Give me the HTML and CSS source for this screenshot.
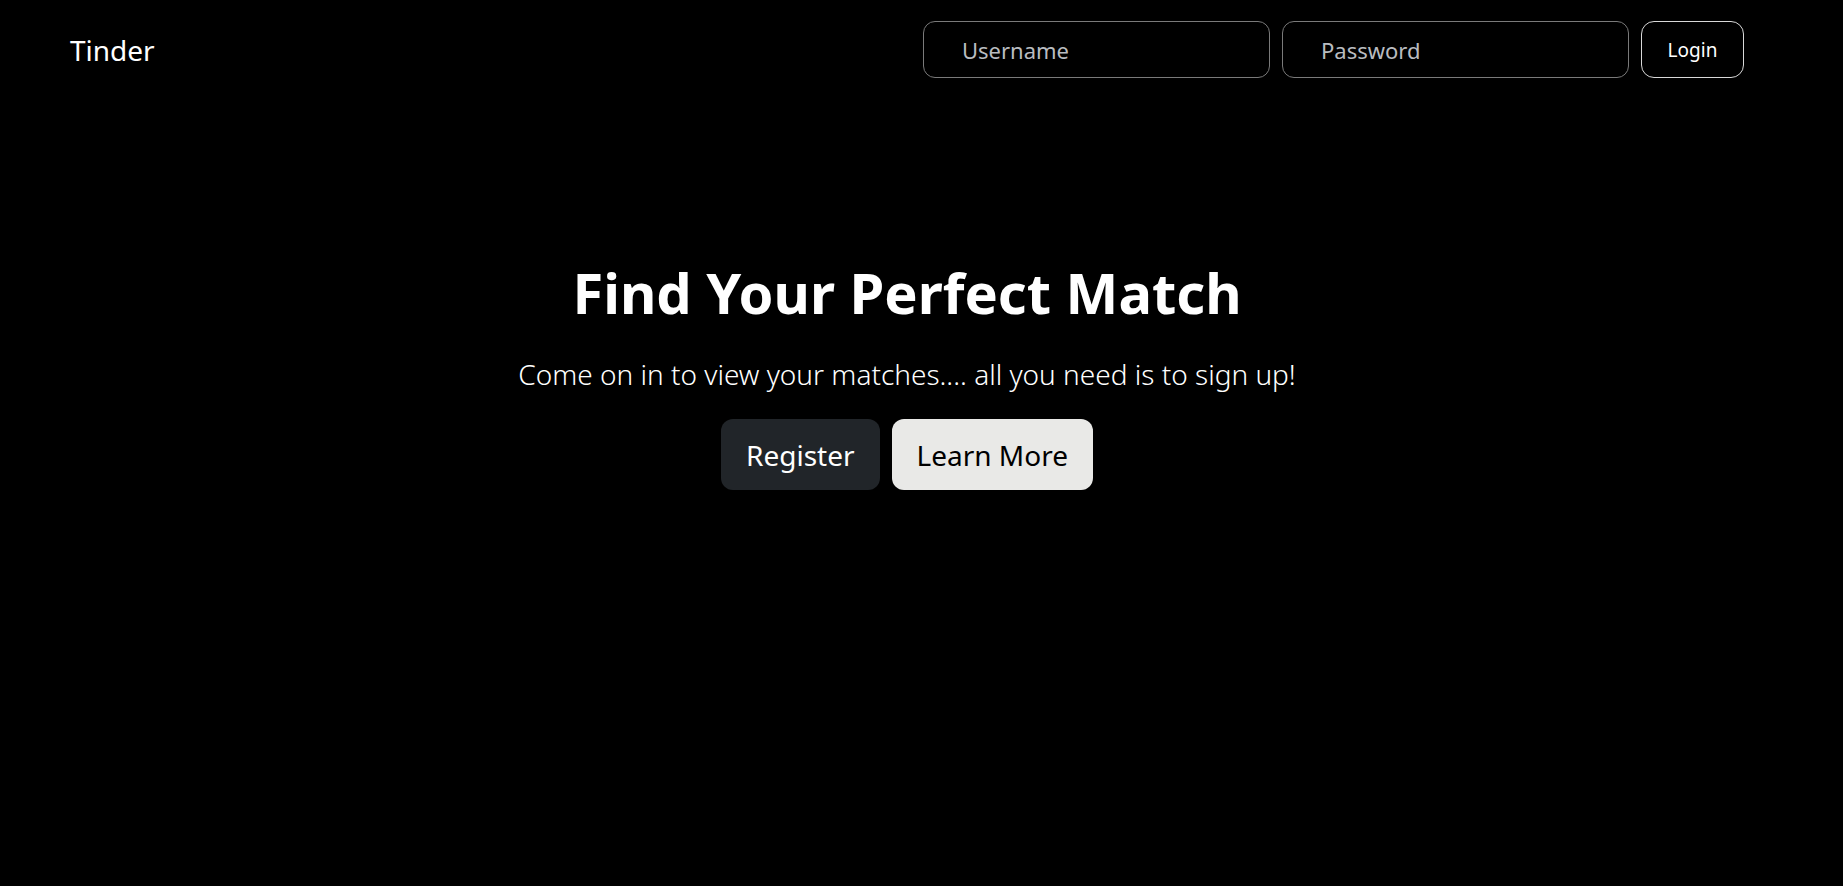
FILE: index.html
```html
<!DOCTYPE html>
<html lang="en">
<head>
<meta charset="utf-8">
<title>Tinder</title>
<link rel="stylesheet" href="styles.css">
</head>
<body>
<nav class="navbar">
  <a class="brand" href="#">Tinder</a>
  <form class="login-form">
    <input class="field" type="text" placeholder="Username">
    <input class="field" type="password" placeholder="Password">
    <button class="login-btn" type="button">Login</button>
  </form>
</nav>
<main class="hero">
  <h1 class="title">Find Your Perfect Match</h1>
  <p class="lead">Come on in to view your matches.... all you need is to sign up!</p>
  <div class="actions">
    <button class="btn btn-dark" type="button">Register</button>
    <button class="btn btn-light" type="button">Learn More</button>
  </div>
</main>
</body>
</html>
```
FILE: styles.css
```css
* { box-sizing: border-box; }
html, body {
  margin: 0;
  background: #000;
  color: #fff;
  font-family: "Noto Sans", "Open Sans", sans-serif;
  height: 100%;
}
.navbar {
  display: flex;
  align-items: center;
  justify-content: space-between;
  padding: 20px 99px 0 70px;
  height: 79px;
}
.brand {
  color: #fff;
  text-decoration: none;
  font-size: 28px;
  line-height: 1;
}
.login-form {
  display: flex;
  gap: 12px;
  align-items: stretch;
}
.field {
  width: 347px;
  height: 57px;
  background: #000;
  border: 1px solid #7a7a7a;
  border-radius: 12px;
  color: #fff;
  font-family: inherit;
  font-size: 22px;
  padding: 0 18px 0 38px;
  outline: none;
}
.field::placeholder { color: #b9bcc0; }
.login-btn {
  width: 103px;
  background: #000;
  color: #fff;
  border: 1px solid #d8d8d8;
  border-radius: 13px;
  font-family: inherit;
  font-size: 19px;
  padding: 0;
}
.hero {
  display: flex;
  flex-direction: column;
  align-items: center;
  padding: 180px 29px 0 0;
}
.title {
  margin: 0;
  font-size: 56px;
  font-weight: 700;
  line-height: 1.2;
}
.lead {
  margin: 27px 0 0;
  font-size: 28px;
  font-weight: 300;
  line-height: 1.5;
}
.actions {
  display: flex;
  gap: 12px;
  margin-top: 24px;
}
.btn {
  height: 71px;
  border: none;
  border-radius: 12px;
  font-family: inherit;
  font-size: 28px;
  padding: 0 25px;
}
.btn-dark { background: #212529; color: #fff; }
.btn-light { background: #e9e9e7; color: #000; }
```
